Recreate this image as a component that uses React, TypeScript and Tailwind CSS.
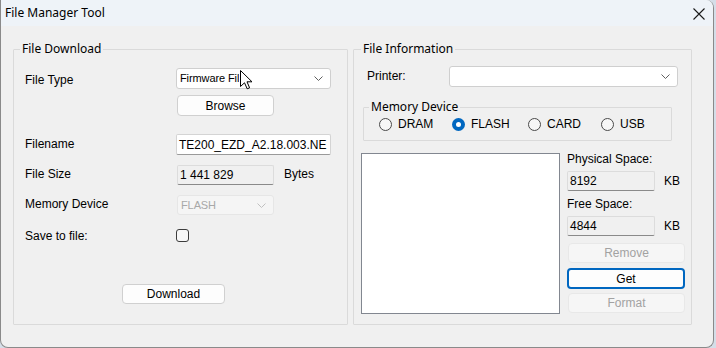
import React from "react";

const sans = { fontFamily: '"Liberation Sans", Arial, sans-serif' };
const ui = { fontFamily: '"Noto Sans", "Open Sans", sans-serif' };

function Chevron({ color = "#606060" }: { color?: string }) {
  return (
    <svg width="9" height="5" viewBox="0 0 9 5" className="shrink-0">
      <path d="M0.5 0.5 L4.5 4.5 L8.5 0.5" fill="none" stroke={color} strokeWidth="1" />
    </svg>
  );
}

function Combo({ w, text, disabled }: { w: string; text?: string; disabled?: boolean }) {
  return (
    <div
      className={`${w} h-full flex items-center justify-between pl-[3px] pr-[7px] rounded-[3px] border ${
        disabled ? "bg-[#f5f5f5] border-[#e6e6e6] text-[#a8a8a8]" : "bg-white border-[#cfcfcf] text-black"
      }`}
    >
      <span className="text-[11px] tracking-[-0.1px] leading-none whitespace-nowrap overflow-hidden">{text}</span>
      <Chevron color={disabled ? "#c0c0c0" : "#606060"} />
    </div>
  );
}

function Btn({ w, h, children, disabled, focus }: { w: string; h: string; children: React.ReactNode; disabled?: boolean; focus?: boolean }) {
  return (
    <div
      className={`${w} ${h} flex items-center justify-center rounded-[4px] text-[12px] leading-none ${
        disabled
          ? "bg-[#f6f6f6] border border-[#e8e8e8] text-[#a2a2a2]"
          : focus
          ? "bg-[#fdfdfd] border-2 border-[#0067c0] text-black"
          : "bg-[#fdfdfd] border border-[#d0d0d0] text-black"
      }`}
    >
      {children}
    </div>
  );
}

function ReadBox({ w, text }: { w: string; text: string }) {
  return (
    <div className={`${w} h-[20px] flex items-center pl-[2px] bg-[#f0f0f0] border border-[#dcdcdc] border-b-[#8a8a8a] rounded-[2px] text-[12px] leading-none text-black`}>
      {text}
    </div>
  );
}

function Radio({ label, checked, w }: { label: string; checked?: boolean; w: string }) {
  return (
    <div className={`${w} flex items-center gap-[6px]`}>
      {checked ? (
        <div className="w-[13px] h-[13px] rounded-full bg-[#0067c0] flex items-center justify-center">
          <div className="w-[5px] h-[5px] rounded-full bg-white" />
        </div>
      ) : (
        <div className="w-[13px] h-[13px] rounded-full border border-[#4a4a4a] bg-[#f7f7f7]" />
      )}
      <span className="text-[12px] leading-none text-black">{label}</span>
    </div>
  );
}

export default function App() {
  return (
    <div className="relative w-[716px] h-[348px] bg-[#d5dee8] overflow-hidden" style={sans}>
      <div className="w-[714px] h-[348px] bg-[#f0f0f0] border-x border-b border-[#8a8a8a] rounded-b-[8px] rounded-tr-[8px] flex flex-col overflow-hidden">
        {/* title bar */}
        <div className="h-[26px] bg-[#eef3f8] flex items-center justify-between pl-[4px] pr-[6px] shrink-0">
          <span className="text-[12px] leading-none text-black" style={ui}>File Manager Tool</span>
          <svg width="12" height="12" viewBox="0 0 12 12" className="mr-[2px] mt-[2px]">
            <path d="M0.5 0.5 L11.5 11.5 M11.5 0.5 L0.5 11.5" stroke="#1a1a1a" strokeWidth="1.1" />
          </svg>
        </div>

        {/* body */}
        <div className="flex pl-[12px] pt-[15px] gap-[5px]">
          {/* File Download */}
          <fieldset className="w-[335px] h-[284px] border border-[#dadada] rounded-[1px]">
            <legend className="ml-[6px] px-[2px] text-[12px] leading-[16px] text-black" style={ui}>File Download</legend>
            <div className="flex flex-col pl-[11px]">
              <div className="mt-[11px] h-[21px] flex items-center">
                <span className="w-[151px] text-[12px] leading-none pt-[3px]">File Type</span>
                <Combo w="w-[155px]" text="Firmware Fil" />
              </div>
              <div className="mt-[6px] h-[21px] flex items-center pl-[152px]">
                <Btn w="w-[97px]" h="h-[21px]">Browse</Btn>
              </div>
              <div className="mt-[18px] h-[21px] flex items-center">
                <span className="w-[151px] text-[12px] leading-none pb-[2px]">Filename</span>
                <div className="w-[155px] h-[21px] flex items-center pl-[2px] bg-white border border-[#d4d4d4] border-b-[#9a9a9a] rounded-[2px] text-[12px] leading-none whitespace-nowrap overflow-hidden">
                  TE200_EZD_A2.18.003.NE
                </div>
              </div>
              <div className="mt-[10px] h-[20px] flex items-center">
                <span className="w-[152px] text-[12px] leading-none pb-[3px]">File Size</span>
                <ReadBox w="w-[97px]" text="1 441 829" />
                <span className="ml-[10px] text-[12px] leading-none pb-[3px]">Bytes</span>
              </div>
              <div className="mt-[10px] h-[20px] flex items-center">
                <span className="w-[152px] text-[12px] leading-none pb-[2px]">Memory Device</span>
                <Combo w="w-[97px]" text="FLASH" disabled />
              </div>
              <div className="mt-[14px] h-[13px] flex items-center">
                <span className="w-[151px] text-[12px] leading-none">Save to file:</span>
                <div className="w-[13px] h-[13px] rounded-[3px] border border-[#3c3c3c] bg-[#f7f7f7]" />
              </div>
              <div className="mt-[42px] pl-[97px]">
                <Btn w="w-[103px]" h="h-[20px]">Download</Btn>
              </div>
            </div>
          </fieldset>

          {/* File Information */}
          <fieldset className="w-[339px] h-[284px] border border-[#dadada] rounded-[1px]">
            <legend className="ml-[7px] px-[2px] text-[12px] leading-[16px] text-black" style={ui}>File Information</legend>
            <div className="flex flex-col">
              <div className="mt-[9px] h-[21px] flex items-center pl-[13px]">
                <span className="w-[82px] text-[12px] leading-none pb-[1px]">Printer:</span>
                <Combo w="w-[229px]" />
              </div>
              <fieldset className="mt-[12px] ml-[9px] w-[309px] h-[42px] border border-[#dadada] rounded-[1px]">
                <legend className="ml-[5px] px-[2px] text-[12px] leading-[16px] text-black" style={ui}>Memory Device</legend>
                <div className="mt-[1px] h-[16px] flex items-center pl-[15px]">
                  <Radio w="w-[73px]" label="DRAM" />
                  <Radio w="w-[76px]" label="FLASH" checked />
                  <Radio w="w-[73px]" label="CARD" />
                  <Radio w="w-[60px]" label="USB" />
                </div>
              </fieldset>
              <div className="mt-[12px] flex">
                <div className="ml-[7px] w-[199px] h-[161px] bg-white border border-[#828790]" />
                <div className="ml-[7px] w-[118px] flex flex-col">
                  <span className="text-[12px] leading-[12px] h-[12px]">Physical Space:</span>
                  <div className="mt-[6px] flex items-center">
                    <ReadBox w="w-[88px]" text="8192" />
                    <span className="ml-[9px] text-[12px] leading-none">KB</span>
                  </div>
                  <span className="mt-[7px] text-[12px] leading-[12px] h-[12px]">Free Space:</span>
                  <div className="mt-[6px] flex items-center">
                    <ReadBox w="w-[88px]" text="4844" />
                    <span className="ml-[9px] text-[12px] leading-none">KB</span>
                  </div>
                  <div className="mt-[7px] pl-[1px]">
                    <Btn w="w-[117px]" h="h-[20px]" disabled>Remove</Btn>
                  </div>
                  <div className="mt-[5px]">
                    <Btn w="w-[118px]" h="h-[21px]" focus>Get</Btn>
                  </div>
                  <div className="mt-[4px] pl-[1px]">
                    <Btn w="w-[117px]" h="h-[20px]" disabled>Format</Btn>
                  </div>
                </div>
              </div>
            </div>
          </fieldset>
        </div>
      </div>

      {/* mouse cursor */}
      <svg className="absolute left-[240px] top-[70px]" width="13" height="20" viewBox="0 0 13 20">
        <path d="M0.5 0.5 L0.5 16.5 L4.5 12.8 L7.2 18.8 L9.6 17.8 L7 11.8 L12 11.8 Z" fill="#ffffff" stroke="#000000" strokeWidth="1" strokeLinejoin="round" />
      </svg>
    </div>
  );
}
